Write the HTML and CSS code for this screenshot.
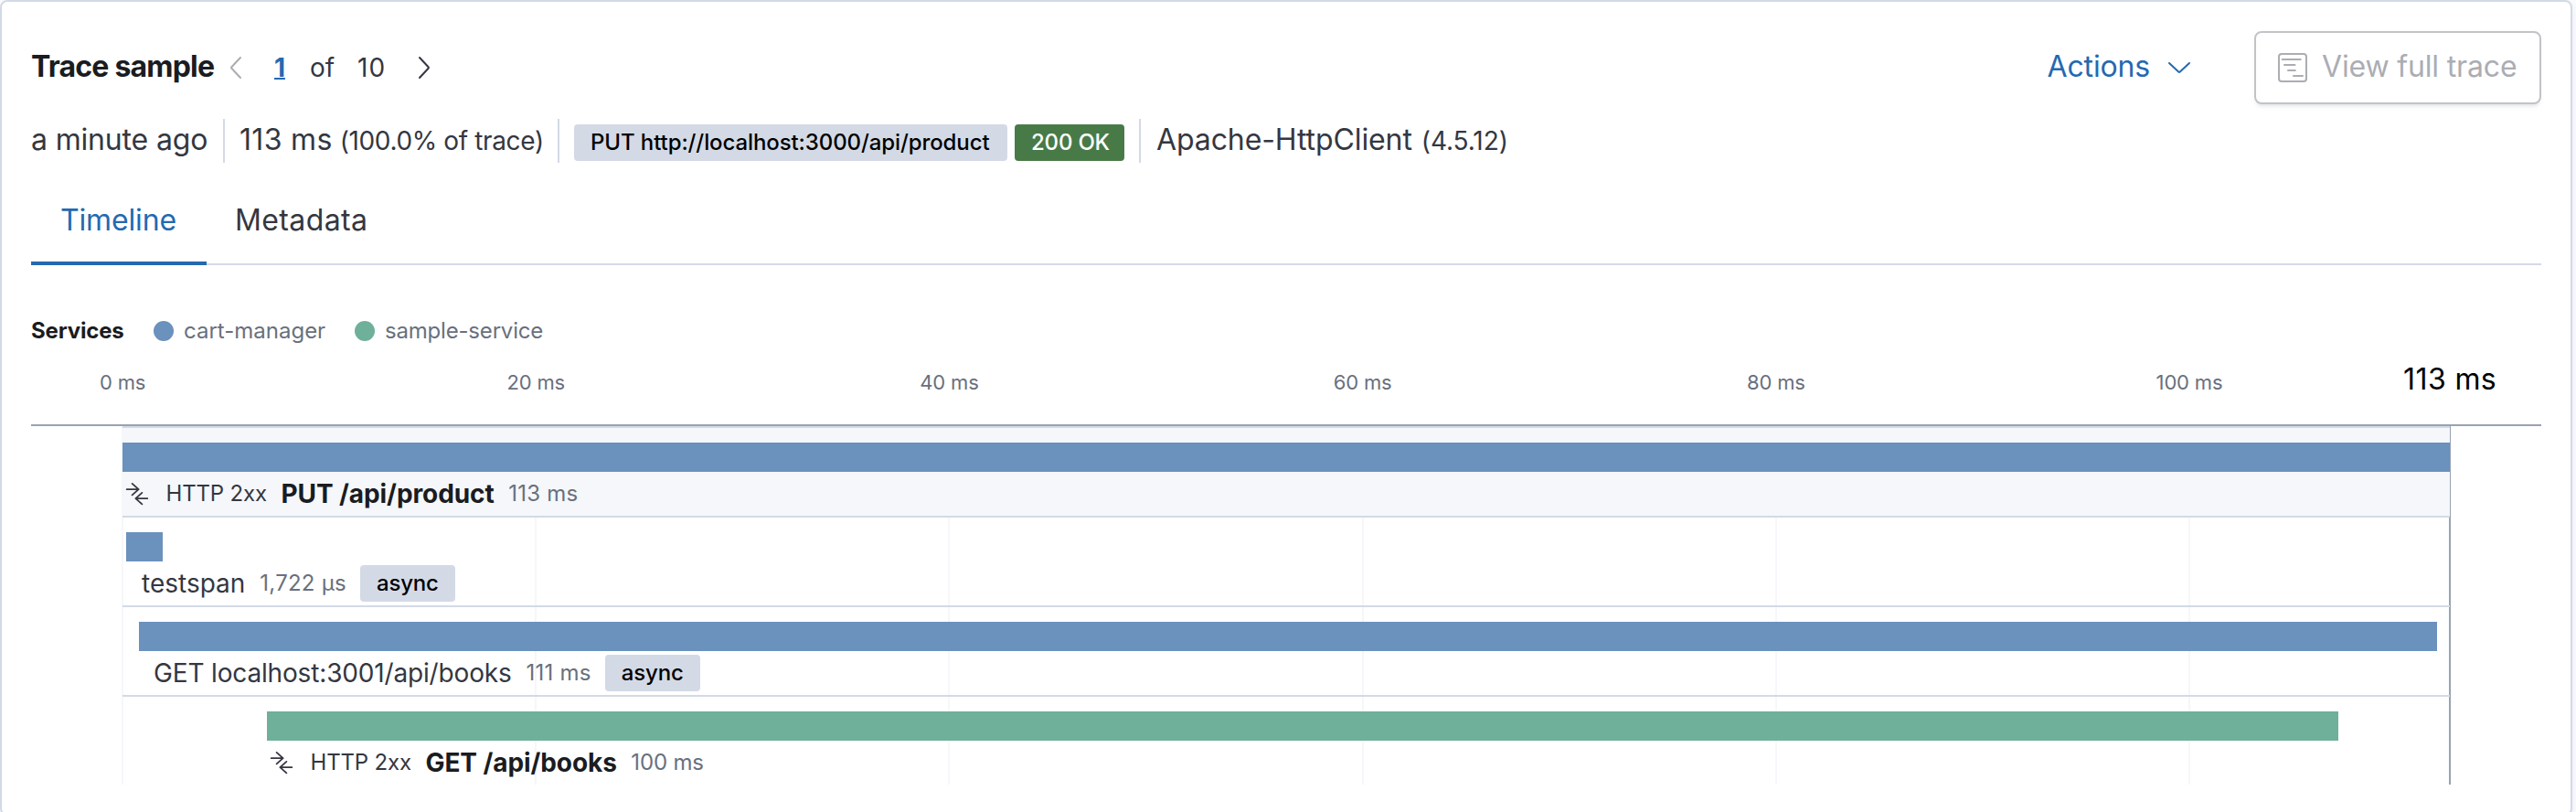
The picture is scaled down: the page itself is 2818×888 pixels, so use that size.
FILE: index.html
```html
<!DOCTYPE html>
<html lang="en">
<head>
<meta charset="utf-8">
<title>Trace sample</title>
<link rel="stylesheet" href="styles.css">
</head>
<body>
<main class="panel">
  <header class="head">
    <h2 class="title">Trace sample</h2>
    <nav class="pager">
      <svg class="arrow arrow-off" viewBox="0 0 14 26"><path d="M12 2 2.400 12.200a1.200 1.200 0 0 0 0 1.600L12 24"/></svg>
      <a class="current">1</a>
      <span class="of">of</span>
      <span class="total">10</span>
      <svg class="arrow" viewBox="0 0 14 26"><path d="m2 2 9.600 10.200a1.200 1.200 0 0 1 0 1.600L2 24"/></svg>
    </nav>
    <button class="actions"><span>Actions</span>
      <svg class="down" viewBox="0 0 26 14"><path d="m2 2 10.200 9.600a1.200 1.200 0 0 0 1.600 0L24 2"/></svg>
    </button>
    <button class="full" disabled>
      <svg class="trace-icon" viewBox="0 0 32 32"><rect x="1" y="1" width="30" height="30" rx="3"/><path d="M4.700 7h20M7 13h11.500M11 19h7.800M17 25h10"/></svg>
      <span>View full trace</span>
    </button>
  </header>
  <div class="summary">
    <div class="item item-age"><span>a minute ago</span></div>
    <div class="item item-duration"><span class="num">113 ms</span><small>(100.0% of trace)</small></div>
    <div class="item item-request"><span class="badge badge-url">PUT http://localhost:3000/api/product</span><span class="badge badge-ok">200 OK</span></div>
    <div class="item item-agent"><span>Apache-HttpClient</span><small>(4.5.12)</small></div>
  </div>
  <div class="tabs">
    <div class="tab tab-on">Timeline</div>
    <div class="tab tab-meta">Metadata</div>
  </div>
  <div class="legend">
    <strong>Services</strong>
    <i class="dot blue"></i><span class="service">cart-manager</span>
    <i class="dot green"></i><span class="service last">sample-service</span>
  </div>
  <div class="axis">
    <span class="tick">0 ms</span><span class="tick">20 ms</span><span class="tick">40 ms</span><span class="tick">60 ms</span><span class="tick">80 ms</span><span class="tick">100 ms</span>
    <span class="tick-end">113 ms</span>
  </div>
  <div class="chart">
    <div class="grid"><i></i><i></i><i></i><i></i><i></i><i></i></div>
    <div class="row row-on">
      <div class="bar blue" style="margin-left:0;width:2546px"></div>
      <div class="label" style="margin-left:4px">
        <svg class="merge" viewBox="0 0 24 24"><path d="M.700 7.200H13.600M6.600.900l7 6.300-7 6.200M23.300 17.200H10.500M17.400 10.900l-7 6.300 7 6.200"/></svg>
        <span class="http">HTTP 2xx</span><strong class="name">PUT /api/product</strong><span class="time num">113 ms</span>
      </div>
    </div>
    <div class="row">
      <div class="bar blue" style="margin-left:4px;width:40px"></div>
      <div class="label" style="margin-left:21px"><span class="name wide">testspan</span><span class="time num">1,722 µs</span><span class="badge async">async</span></div>
    </div>
    <div class="row">
      <div class="bar blue" style="margin-left:18px;width:2514px"></div>
      <div class="label" style="margin-left:34px"><span class="name">GET localhost:3001/api/books</span><span class="time num">111 ms</span><span class="badge async">async</span></div>
    </div>
    <div class="row">
      <div class="bar green" style="margin-left:158px;width:2266px"></div>
      <div class="label" style="margin-left:162px">
        <svg class="merge" viewBox="0 0 24 24"><path d="M.700 7.200H13.600M6.600.900l7 6.300-7 6.200M23.300 17.200H10.500M17.400 10.900l-7 6.300 7 6.200"/></svg>
        <span class="http">HTTP 2xx</span><strong class="name">GET /api/books</strong><span class="time">100 ms</span>
      </div>
    </div>
  </div>
</main>
</body>
</html>
```
FILE: styles.css
```css
* { box-sizing: border-box; }
body {
  margin: 0;
  height: 888px;
  overflow: hidden;
  background: #fafbfd;
  color: #343741;
  font-family: Inter, "Liberation Sans", sans-serif;
  font-size: 32px;
  line-height: 48px;
  letter-spacing: -0.005em;
}
h2, button { margin: 0; font: inherit; letter-spacing: inherit; }
svg { display: block; fill: none; stroke: currentColor; stroke-width: 2; stroke-linecap: round; stroke-linejoin: round; flex: none; overflow: visible; }
.panel {
  width: 2814px;
  height: 892px;
  padding: 32px;
  background: #fff;
  border: 2px solid #d3dae6;
  border-radius: 8px;
  box-shadow: 0 4px 8px -2px rgba(152, 162, 179, .3);
}
.num { letter-spacing: 0.01em; }

/* Header */
.head { display: flex; align-items: center; height: 80px; }
.title { width: 217px; padding-bottom: 2px; color: #1a1c21; font-weight: 700; letter-spacing: -0.025em; white-space: nowrap; }
.pager { display: flex; align-items: center; font-size: 28px; }
.arrow { width: 14px; height: 26px; color: #343741; }
.arrow-off { color: #abadb3; }
.current { width: 13px; margin-left: 35px; color: #2469b1; font-weight: 700; text-decoration: underline; text-decoration-thickness: 2px; }
.of { width: 26px; margin-left: 26px; }
.total { width: 31px; margin: 0 35px 0 26px; letter-spacing: 1px; }
.actions { display: flex; align-items: center; margin-left: auto; padding: 0; border: 0; background: none; color: #2469b1; }
.actions span, .full span { padding-bottom: 2px; }
.down { width: 26px; height: 14px; margin-left: 19px; }
.full {
  display: flex; align-items: center;
  width: 314px; height: 80px; margin-left: 69px; padding: 0 0 0 24px;
  border: 2px solid #c2c3c6; border-radius: 8px; background: #fff; color: #abadb3;
  box-shadow: 0 4px 4px -2px rgba(152, 162, 179, .3);
  white-space: nowrap;
}
.trace-icon { width: 32px; height: 32px; margin-right: 16px; }

/* Summary */
.summary { display: flex; height: 48px; margin-top: 16px; }
.item { display: flex; align-items: baseline; line-height: 46px; white-space: nowrap; }
.item + .item { border-left: 2px solid #d3dae6; padding-left: 16px; }
.item small { font-size: 28px; margin-left: 8px; letter-spacing: -0.013em; }
.item-age { width: 210px; }
.item-duration { width: 366px; }
.item-request { width: 636px; align-items: flex-start; padding-top: 6px; }
.item.item-agent { padding-left: 17px; letter-spacing: -0.003em; }
.item-agent small { margin-left: 10px; letter-spacing: -0.003em; }
.badge { display: flex; height: 40px; padding: 0 18px; border-radius: 4px; background: #d3dae6; color: #000; font-size: 24px; line-height: 40px; font-weight: 500; }
.badge-url { width: 474px; letter-spacing: -0.004em; }
.badge-ok { width: 120px; margin-left: 8px; background: #487a48; color: #fff; letter-spacing: -0.008em; }

/* Tabs */
.tabs { display: flex; height: 96px; margin-top: 16px; border-bottom: 2px solid #d3dae6; }
.tab { height: 96px; padding: 23px 32px 0; }
.tab-on { width: 192px; color: #2469b1; border-bottom: 4px solid #2469b1; }
.tab.tab-meta { padding-left: 31px; letter-spacing: 0.012em; }

/* Legend */
.legend { display: flex; align-items: center; height: 36px; margin-top: 54px; font-size: 24px; color: #69707d; white-space: nowrap; }
.legend strong { width: 102px; color: #1a1c21; }
.dot { width: 22px; height: 22px; margin: 0 11px 0 32px; border-radius: 50%; }
.service { width: 155px; letter-spacing: 0; }
.last { letter-spacing: -0.008em; }
.blue { background: #6b91bd; }
.green { background: #6eb09a; }

/* Time axis */
.axis { display: flex; height: 86px; padding-top: 14px; border-bottom: 2px solid #98a2b3; font-size: 22px; color: #69707d; }
.tick { width: 452.2px; text-align: center; flex: none; }
.tick:first-child { margin-left: -126px; }
.tick-end { width: 118px; font-size: 32px; line-height: 42px; letter-spacing: 0.012em; text-align: center; color: #000; }

/* Waterfall */
.chart { position: relative; width: 2546px; height: 392px; margin-left: 100px; }
.grid { position: absolute; inset: 0 -1px; display: flex; border-right: 2px solid #98a2b3; }
.grid i { flex: none; width: 452.2px; border-left: 2px solid #f5f7fa; }
.row { position: relative; height: 98px; padding-top: 16px; border-top: 2px solid #d3dae6; }
.row-on { background: #f5f7fa; }
.bar { height: 32px; }
.label { display: flex; align-items: center; height: 48px; font-size: 28px; white-space: nowrap; }
.merge { width: 24px; height: 24px; margin-right: 19.5px; stroke-width: 1.8; }
.http { font-size: 24px; margin-right: 15.5px; }
.name { margin-right: 16px; }
.wide { letter-spacing: 0; }
strong.name { color: #1a1c21; letter-spacing: -0.003em; margin-right: 15.5px; }
.time { font-size: 24px; color: #69707d; margin-right: 15px; }
```
